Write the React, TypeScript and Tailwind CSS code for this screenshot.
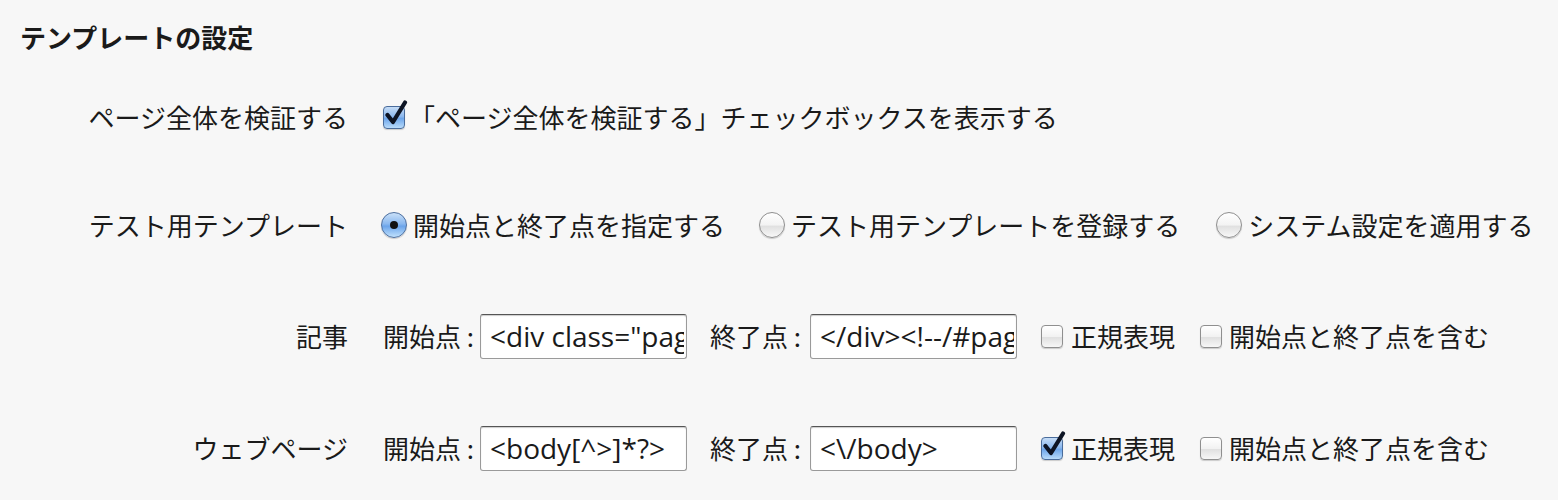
import React from 'react';

const JP = "font-['Noto_Sans_CJK_JP',sans-serif]";

// Aqua風チェックボックス
const Checkbox = ({ checked }: { checked?: boolean }) => (
  <span className="relative inline-block shrink-0 w-[22px] h-[23px] align-middle">
    <span
      className={`absolute inset-0 rounded-[4px] border ${
        checked
          ? 'border-[#4a6c9b] bg-[linear-gradient(to_bottom,#c5dcf6_0%,#8cb8ee_45%,#6ea6ea_55%,#b8dbfb_100%)]'
          : 'border-[#8f8f8f] bg-[linear-gradient(to_bottom,#ffffff_0%,#f2f2f2_50%,#e0e0e0_55%,#f7f7f7_100%)]'
      } shadow-[0_1px_1px_rgba(0,0,0,0.18)]`}
    />
    {checked && (
      <svg className="absolute -top-[6px] left-[1px]" width="25" height="27" viewBox="0 0 25 27">
        <path d="M3.5 15 L9 22 L21 2.5" fill="none" stroke="#0d1424" strokeWidth="4.2" strokeLinecap="round" strokeLinejoin="round" />
      </svg>
    )}
  </span>
);

// Aqua風ラジオボタン
const Radio = ({ checked }: { checked?: boolean }) => (
  <span
    className={`relative inline-flex shrink-0 items-center justify-center w-[26px] h-[26px] rounded-full border ${
      checked
        ? 'border-[#4d6f9f] bg-[linear-gradient(to_bottom,#c9e0f8_0%,#8ab8ef_45%,#6ba4ea_55%,#c0e1fc_100%)]'
        : 'border-[#8f8f8f] bg-[linear-gradient(to_bottom,#ffffff_0%,#f3f3f3_50%,#e0e0e0_55%,#f8f8f8_100%)]'
    } shadow-[0_1px_1px_rgba(0,0,0,0.18)]`}
  >
    {checked && <span className="w-[8px] h-[8px] rounded-full bg-[#111]" />}
  </span>
);

const TextInput = ({ value }: { value: string }) => (
  <input
    type="text"
    readOnly
    defaultValue={value}
    className="w-[207px] h-[45px] shrink-0 rounded-[3px] border border-[#9a9a9a] border-t-[#555] bg-white shadow-[inset_0_1px_1px_rgba(0,0,0,0.2)] pl-[9px] pr-[2px] font-['Open_Sans',sans-serif] text-[28px] text-[#1a1a1a] outline-none"
  />
);

const Row = ({ label, className, children }: { label: string; className?: string; children: React.ReactNode }) => (
  <div className={`flex items-center h-[44px] ${className ?? ''}`}>
    <div className="w-[328px] shrink-0 text-right">{label}</div>
    <div className="ml-[33px] flex items-center">{children}</div>
  </div>
);

const RangeRow = ({ start, end, regex }: { start: string; end: string; regex?: boolean }) => (
  <>
    <span className="ml-[2px] w-[97px] shrink-0">開始点 :</span>
    <TextInput value={start} />
    <span className="ml-[23px] w-[100px] shrink-0">終了点 :</span>
    <TextInput value={end} />
    <span className="ml-[24px] flex"><Checkbox checked={regex} /></span>
    <span className="ml-[8px]">正規表現</span>
    <span className="ml-[25px] flex"><Checkbox /></span>
    <span className="ml-[7px]">開始点と終了点を含む</span>
  </>
);

export default function App() {
  return (
    <div className={`min-h-screen bg-[#f7f7f7] pl-5 pt-[19px] text-[#1a1a1a] text-[26px] leading-[36px] ${JP}`}>
      <h2 className="font-bold">テンプレートの設定</h2>

      <Row label="ページ全体を検証する" className="mt-[40px]">
        <span className="ml-[2px] flex"><Checkbox checked /></span>
        <span className="ml-[4px]">「ページ全体を検証する」チェックボックスを表示する</span>
      </Row>

      <Row label="テスト用テンプレート" className="mt-[64px]">
        <Radio checked />
        <span className="ml-[6px]">開始点と終了点を指定する</span>
        <span className="ml-[34px] flex"><Radio /></span>
        <span className="ml-[6px]">テスト用テンプレートを登録する</span>
        <span className="ml-[36px] flex"><Radio /></span>
        <span className="ml-[6px]">システム設定を適用する</span>
      </Row>

      <Row label="記事" className="mt-[67px]">
        <RangeRow start={'<div class="page-content">'} end={'</div><!--/#page-content-->'} />
      </Row>

      <Row label="ウェブページ" className="mt-[68px]">
        <RangeRow start={'<body[^>]*?>'} end={'<\\/body>'} regex />
      </Row>
    </div>
  );
}
